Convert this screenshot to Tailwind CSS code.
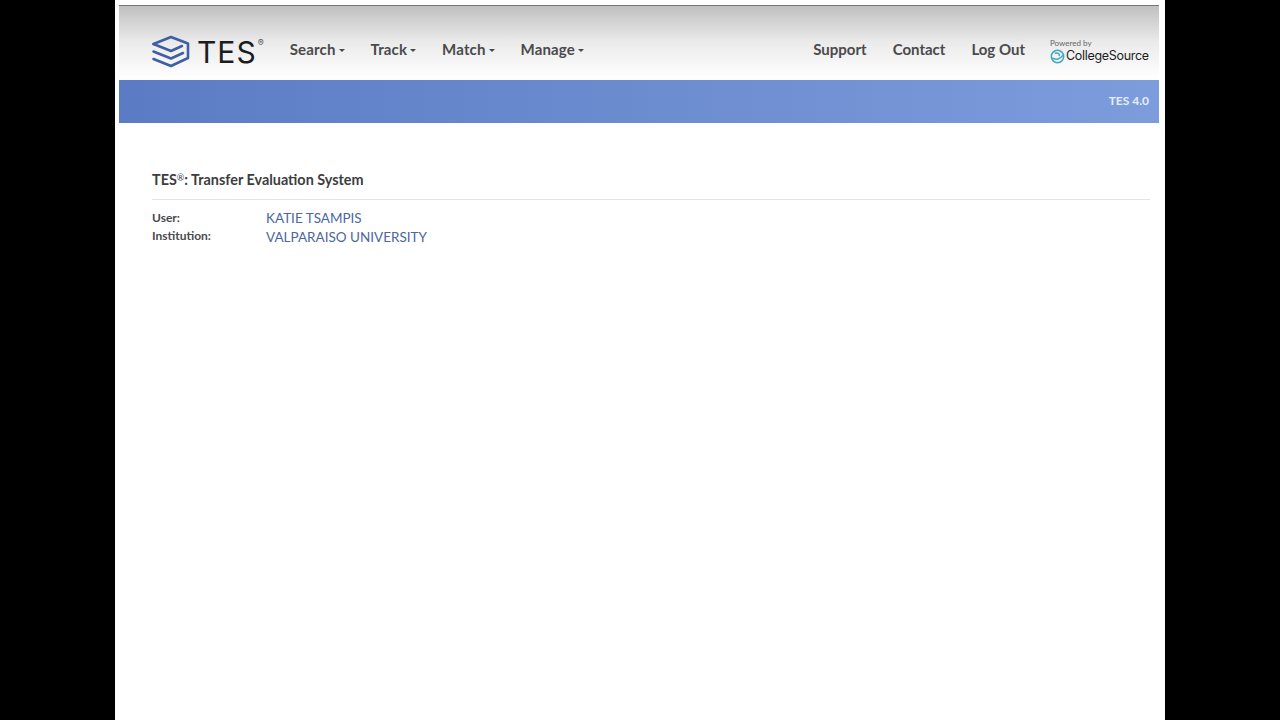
<!DOCTYPE html>
<html>
  <head>
    <meta charset="utf-8">
    <title>TES</title>
    <script src="https://cdn.jsdelivr.net/npm/@tailwindcss/browser@4"></script>
  </head>
  <body class="bg-black font-['Lato','Liberation_Sans',sans-serif]">
    <div class="w-[1050px] h-[720px] ml-[115px] bg-white pl-[4px] pr-[6px] pt-[5px] overflow-hidden">

      <!-- top nav -->
      <nav class="h-[74px] flex items-center pl-[33px] pr-[11px] pt-[14px] border-t border-[#777] bg-linear-to-b from-[#c0c0c0] via-[#ebebeb] via-50% to-white">
        <svg class="w-[40px] h-[36px] shrink-0 ml-[-1px] mt-[4px]" viewBox="0 0 40 36" fill="none" stroke="#3f5fa3" stroke-width="2.6" stroke-linejoin="round" stroke-linecap="round">
          <path d="M2.5 10 L20 3 L37 9.5 V24 L20 32 L2.5 25"/>
          <path d="M2.5 10 L20 17 L31 12"/>
          <path d="M2.5 17.5 L20 24.5 L32 19"/>
        </svg>
        <div class="ml-[6px] mt-[4px] flex items-start text-[30px] leading-none text-[#1c1c1e] tracking-[1px] font-['Inter',sans-serif]">TES<span class="text-[9px] mt-[1px] ml-[1px] text-[#555]">®</span></div>

        <div class="ml-[25px] flex gap-[26px] text-[15px] font-bold text-[#4a4a4c] tracking-[0.15px]">
          <a class="flex items-center">Search<span class="ml-[3px] mt-[2px] border-x-[3px] border-t-[3px] border-x-transparent border-t-[#4a4a4c]"></span></a>
          <a class="flex items-center">Track<span class="ml-[3px] mt-[2px] border-x-[3px] border-t-[3px] border-x-transparent border-t-[#4a4a4c]"></span></a>
          <a class="flex items-center">Match<span class="ml-[3px] mt-[2px] border-x-[3px] border-t-[3px] border-x-transparent border-t-[#4a4a4c]"></span></a>
          <a class="flex items-center">Manage<span class="ml-[3px] mt-[2px] border-x-[3px] border-t-[3px] border-x-transparent border-t-[#4a4a4c]"></span></a>
        </div>

        <div class="flex-grow"></div>

        <div class="flex gap-[26px] text-[15px] font-bold text-[#4a4a4c]">
          <a>Support</a>
          <a>Contact</a>
          <a>Log Out</a>
        </div>

        <div class="ml-[25px] w-[98px] mt-[4px]">
          <div class="text-[8px] leading-[9px] text-[#666]">Powered by</div>
          <div class="flex items-center mt-[1px]">
            <svg class="w-[15px] h-[15px] shrink-0" viewBox="0 0 16 16" fill="none" stroke="#3fa9c4" stroke-width="1.6">
              <circle cx="8" cy="8" r="6.6"/>
              <path d="M2 9.5 C6 12 11 11 14 6.5 M5 4.5 C8 3.5 10.5 5 10 7.5"/>
            </svg>
            <span class="ml-[1px] text-[12.5px] leading-none text-[#1c1c1e] font-['Inter',sans-serif] tracking-[-0.3px]">CollegeSource</span>
          </div>
        </div>
      </nav>

      <!-- blue banner -->
      <div class="mt-[1px] h-[43px] flex items-center justify-end pr-[10px] bg-linear-to-r from-[#5b7cc4] to-[#7d9cdc]">
        <span class="text-[12px] font-bold text-[#e6edf8] mb-[2px]">TES 4.0</span>
      </div>

      <!-- content -->
      <div class="pl-[33px] pr-[9px] pt-[48px]">
        <h1 class="text-[14.4px] leading-[17px] pb-[11px] font-bold text-[#3d3d3f] border-b border-[#e4e4e4]">TES<sup class="text-[9px] font-normal">®</sup>: Transfer Evaluation System</h1>
        <div class="mt-[9px] grid grid-cols-[114px_1fr] auto-rows-[19px] items-center">
          <div class="text-[12px] font-bold text-[#4a4a4c] -mt-[2px]">User:</div>
          <div class="text-[13.5px] text-[#4c669f]">KATIE TSAMPIS</div>
          <div class="text-[12px] font-bold text-[#4a4a4c] -mt-[4px]">Institution:</div>
          <div class="text-[13.5px] text-[#4c669f]">VALPARAISO UNIVERSITY</div>
        </div>
      </div>
    </div>
  </body>
</html>
